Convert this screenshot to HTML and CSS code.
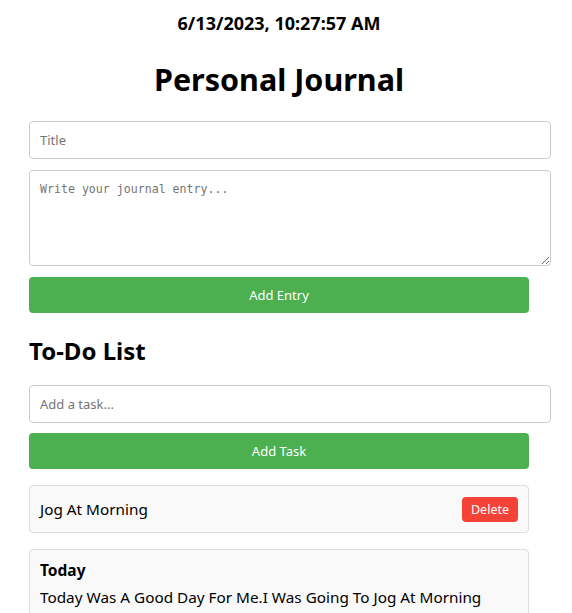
FILE: index.html
```html
<!DOCTYPE html>
<html lang="en">
<head>
<meta charset="utf-8">
<title>Personal Journal</title>
<link rel="stylesheet" href="styles.css">
</head>
<body>
<div class="app">
  <div class="date">6/13/2023, 10:27:57 AM</div>
  <h1 class="title">Personal Journal</h1>
  <input class="field" type="text" placeholder="Title">
  <textarea class="field area" placeholder="Write your journal entry..."></textarea>
  <button class="btn">Add Entry</button>
  <h2 class="subtitle">To-Do List</h2>
  <input class="field" type="text" placeholder="Add a task...">
  <button class="btn btn-task">Add Task</button>
  <div class="todo">
    <span class="todo-text">Jog At Morning</span>
    <button class="btn-delete">Delete</button>
  </div>
  <div class="entry">
    <div class="entry-title">Today</div>
    <div class="entry-body">Today Was A Good Day For Me.I Was Going To Jog At Morning</div>
  </div>
</div>
</body>
</html>
```

FILE: styles.css
```css
* { margin: 0; }
html, body { background: #fff; }
body {
  margin: 0;
  padding: 0 29px;
  font-family: "Noto Sans", "Open Sans", sans-serif;
  color: #000;
  overflow: hidden;
}
.app {
  width: 500px;
  display: flex;
  flex-direction: column;
  align-items: flex-start;
}
.date {
  align-self: stretch;
  text-align: center;
  font-size: 18px;
  font-weight: 700;
  line-height: 24px;
  padding-top: 11px;
}
.title {
  align-self: stretch;
  text-align: center;
  font-size: 30.5px;
  font-weight: 700;
  line-height: 40px;
  margin-top: 24px;
  margin-bottom: 22px;
}
.field {
  width: 100%;
  padding: 10px;
  border: 1px solid #ccc;
  border-radius: 4px;
  font-family: "Noto Sans", sans-serif;
  font-size: 13px;
  line-height: 16px;
  height: 16px;
  background: #fff;
  outline: none;
}
.field::placeholder { color: #757575; }
.area {
  margin-top: 11px;
  height: 74px;
  resize: vertical;
  font-family: "DejaVu Sans Mono", "Liberation Mono", monospace;
  font-size: 11.6px;
}
.btn {
  width: 100%;
  height: 36px;
  margin-top: 11px;
  border: none;
  border-radius: 4px;
  background: #4caf50;
  color: #fff;
  font-family: "Noto Sans", sans-serif;
  font-size: 13px;
  cursor: pointer;
}
.btn-task { margin-top: 10px; }
.subtitle {
  font-size: 24px;
  font-weight: 700;
  line-height: 30px;
  margin-top: 23px;
  margin-bottom: 19px;
}
.todo {
  align-self: stretch;
  margin-top: 16px;
  display: flex;
  align-items: center;
  justify-content: space-between;
  padding: 10px;
  height: 26px;
  border: 1px solid #ddd;
  border-radius: 4px;
  background: #f9f9f9;
}
.todo-text { font-size: 15.3px; line-height: 24px; }
.btn-delete {
  height: 25px;
  width: 56px;
  padding: 0;
  border: none;
  border-radius: 4px;
  background: #f44336;
  color: #fff;
  font-family: "Noto Sans", sans-serif;
  font-size: 12.5px;
}
.entry {
  align-self: stretch;
  margin-top: 16px;
  padding: 10px;
  border: 1px solid #ddd;
  border-radius: 4px;
  background: #f9f9f9;
  min-height: 100px;
}
.entry-title {
  font-size: 15.5px;
  font-weight: 700;
  line-height: 22px;
  margin-top: -1px;
}
.entry-body {
  font-size: 15.3px;
  line-height: 22px;
  margin-top: 5px;
}
```
